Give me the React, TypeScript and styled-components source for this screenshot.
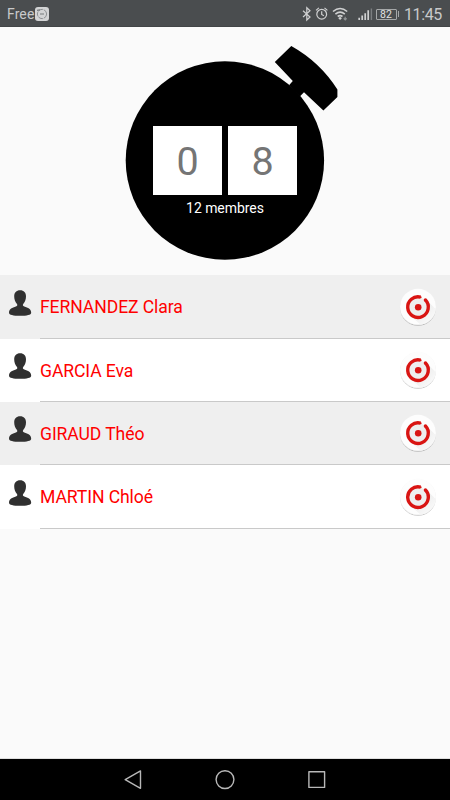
import React from "react";
import styled, { createGlobalStyle } from "styled-components";

const GlobalStyle = createGlobalStyle`
  * { box-sizing: border-box; }
  body { margin: 0; font-family: Roboto, "Liberation Sans", sans-serif; background: #fafafa; }
  svg { display: block; }
`;

const Screen = styled.div`
  width: 450px;
  height: 800px;
  display: flex;
  flex-direction: column;
  background: #fafafa;
  overflow: hidden;
`;

const StatusBar = styled.header`
  height: 27px;
  padding: 2px 9px 0 7px;
  display: flex;
  align-items: center;
  justify-content: space-between;
  background: #4a4d4f;
  border-bottom: 1px solid #424547;
  color: #c8c9ca;
`;

const Carrier = styled.div`
  display: flex;
  align-items: center;
  gap: 1px;
  font-size: 14px;
  line-height: 24px;
  letter-spacing: 0.1px;
`;

const Clock = styled.span`
  width: 37px;
  margin-left: 5px;
  padding-top: 2px;
  font-size: 16px;
  line-height: 24px;
  white-space: nowrap;
  letter-spacing: -0.4px;
`;

const StatusIcons = styled.div`
  display: flex;
  align-items: center;
`;

const Battery = styled.div`
  width: 21px;
  height: 11px;
  border: 1px solid #a5a7a8;
  border-radius: 1px;
  color: #e2e2e2;
  font-size: 10.5px;
  line-height: 10px;
  text-align: center;
`;

const BatteryTip = styled.div`
  width: 1.5px;
  height: 6px;
  margin-left: 1px;
  background: #a5a7a8;
`;

const Watch = styled.section`
  height: 248px;
  display: grid;
  grid-template: 248px / 450px;
  > * { grid-area: 1 / 1; }
`;

const Face = styled.div`
  z-index: 1;
  display: flex;
  flex-direction: column;
  align-items: center;
  padding-top: 98.5px;
`;

const Digits = styled.div`
  display: flex;
  gap: 6px;
`;

const Digit = styled.div`
  width: 69px;
  height: 69px;
  background: #fff;
  color: #757575;
  font-size: 39.5px;
  line-height: 72px;
  text-align: center;
`;

const MemberCount = styled.div`
  margin-top: 5px;
  color: #fff;
  font-size: 14px;
  letter-spacing: -0.05px;
  line-height: 17px;
`;

const List = styled.ul`
  flex: 1;
  margin: 0;
  padding: 0;
  list-style: none;
`;

const Row = styled.li<{ $shaded: boolean; $tall: boolean }>`
  height: ${(p) => (p.$tall ? 64 : 63)}px;
  display: flex;
  background: ${(p) => (p.$shaded ? "#efefef" : "#ffffff")};
`;

const Avatar = styled.div<{ $tall: boolean }>`
  width: 40px;
  padding: ${(p) => (p.$tall ? 14.5 : 14)}px 0 0 9px;
`;

const RowBody = styled.div`
  flex: 1;
  display: flex;
  align-items: center;
  justify-content: space-between;
  padding-right: 12px;
  border-bottom: 1px solid #c9c9c9;
`;

const Name = styled.span`
  color: #ff0000;
  font-size: 17.6px;
  line-height: 24px;
  letter-spacing: -0.1px;
  padding-top: 1px;
`;

const NavBar = styled.nav`
  height: 42px;
  display: flex;
  justify-content: center;
  align-items: center;
  gap: 72px;
  background: #000;
  border-top: 1px solid #dedede;
`;

const members = ["FERNANDEZ Clara", "GARCIA Eva", "GIRAUD Théo", "MARTIN Chloé"];

const MessageIcon = () => (
  <svg width="14" height="14" viewBox="0 0 14 14">
    <rect width="14" height="14" rx="3" fill="#d3d4d5" />
    <circle cx="7" cy="7" r="4.6" fill="none" stroke="#85888a" strokeWidth="0.9" strokeDasharray="5 0.8" />
    <path d="M2 3.4l3-.6M5 7h4" stroke="#777a7c" strokeWidth="1.2" />
  </svg>
);

const ConnectivityIcons = () => (
  <svg width="74" height="16" viewBox="0 0 74 16" fill="none" stroke="#cfd0d1" strokeWidth="1.2">
    <path d="M1 4.8l7 6.2L4.8 14V1.7L8 4.8 1 11" />
    <circle cx="19.7" cy="8.2" r="4.9" />
    <path d="M19.7 5.3v3.2l2.2 1.2M14 4.4l2.9-2.5M22.5 1.9l2.9 2.5" />
    <path d="M31 5.5q7.1-6 14.2 0M33.4 8.1q4.7-3.8 9.4 0M35.7 10.5q2.4-1.8 4.8 0" strokeWidth="1.6" />
    <path d="M38.1 10.8l1.8 1.5-1.8 1.8-1.8-1.8z" fill="#cfd0d1" stroke="none" />
    <path d="M43.2 10.8v3M41.7 12.3l1.5 1.5 1.5-1.5" stroke="#909395" />
    <path d="M57.2 11.8V14M60.2 9.6V14M63.2 7.2V14M66.2 4.2V14" strokeWidth="1.7" />
    <path d="M69.4 2.5V14" stroke="#7b7e80" strokeWidth="1.4" />
  </svg>
);

const Stopwatch = () => (
  <svg width="450" height="248" viewBox="0 27 450 248">
    <circle cx="224.9" cy="160.5" r="99.2" />
    <path d="M291.3 45.9Q320 62 337.4 89.4V97L323.4 110.6 304 92.2 299.8 96.5 289 85.3 292.8 81 274.8 62Z" />
  </svg>
);

const PersonIcon = () => (
  <svg width="23" height="27" viewBox="0 0 23 27">
    <path
      d="M11.1.2C7.3.2 5.2 2.6 5.2 6.3c0 3.1 1 5.7 2.6 7.4.8.9.7 2.1-.4 2.6C4.4 17.6 0 18.4 0 22.7c0 2.2 4.3 3.1 11.1 3.1S22.2 24.9 22.2 22.7c0-4.3-4.4-5.1-7.4-6.4-1.1-.5-1.2-1.7-.4-2.6 1.6-1.7 2.6-4.3 2.6-7.4 0-3.7-2.1-6.1-5.9-6.1Z"
      fill="#303030"
    />
  </svg>
);

const TargetIcon = () => (
  <svg width="40" height="40" viewBox="0 0 40 40">
    <defs>
      <filter id="discShadow" x="-20%" y="-20%" width="140%" height="140%">
        <feDropShadow dx="0" dy="0.8" stdDeviation="0.6" floodOpacity="0.28" />
      </filter>
      <linearGradient id="longShadow" x1="0" y1="0" x2="1" y2="1">
        <stop offset="0.4" stopColor="#ededed" />
        <stop offset="0.9" stopColor="#fbfbfb" />
      </linearGradient>
    </defs>
    <circle cx="20" cy="19.8" r="18" fill="#fdfdfd" filter="url(#discShadow)" />
    <path d="M29 13.5l8.6 8.6A18 18 0 0 1 22.3 37.6L12 28Z" fill="url(#longShadow)" />
    <circle cx="20.2" cy="20.2" r="10" fill="#eeeeee" />
    <path d="M22.6 10.1A10.3 10.3 0 1 0 27.4 12.9" fill="none" stroke="#d91513" strokeWidth="3.4" />
    <circle cx="27.4" cy="12.9" r="1.7" fill="#d91513" />
    <circle cx="22.6" cy="10.2" r="1" fill="#d91513" />
    <circle cx="20.2" cy="20.2" r="3.3" fill="#d91513" />
  </svg>
);

const NavIcon = ({ d }: { d: string }) => (
  <svg width="20" height="20" viewBox="0 0 20 20" fill="none" stroke="#b8b8b8" strokeWidth="1.4" strokeLinejoin="round">
    <path d={d} />
  </svg>
);

export default function App() {
  return (
    <Screen>
      <GlobalStyle />
      <StatusBar>
        <Carrier>
          Free
          <MessageIcon />
        </Carrier>
        <StatusIcons>
          <ConnectivityIcons />
          <Battery>82</Battery>
          <BatteryTip />
          <Clock>11:45</Clock>
        </StatusIcons>
      </StatusBar>
      <Watch>
        <Stopwatch />
        <Face>
          <Digits>
            <Digit>0</Digit>
            <Digit>8</Digit>
          </Digits>
          <MemberCount>12 membres</MemberCount>
        </Face>
      </Watch>
      <List>
        {members.map((name, i) => {
          const tall = i === 0 || i === members.length - 1;
          return (
            <Row key={name} $shaded={i % 2 === 0} $tall={tall}>
              <Avatar $tall={tall}>
                <PersonIcon />
              </Avatar>
              <RowBody>
                <Name>{name}</Name>
                <TargetIcon />
              </RowBody>
            </Row>
          );
        })}
      </List>
      <NavBar>
        <NavIcon d="M2.2 9.6L17.5 0.9V18.3Z" />
        <NavIcon d="M10 0.7A8.9 8.9 0 1 1 10 18.5A8.9 8.9 0 1 1 10 0.7Z" />
        <NavIcon d="M1.9 1.8H17.6V17.4H1.9Z" />
      </NavBar>
    </Screen>
  );
}
